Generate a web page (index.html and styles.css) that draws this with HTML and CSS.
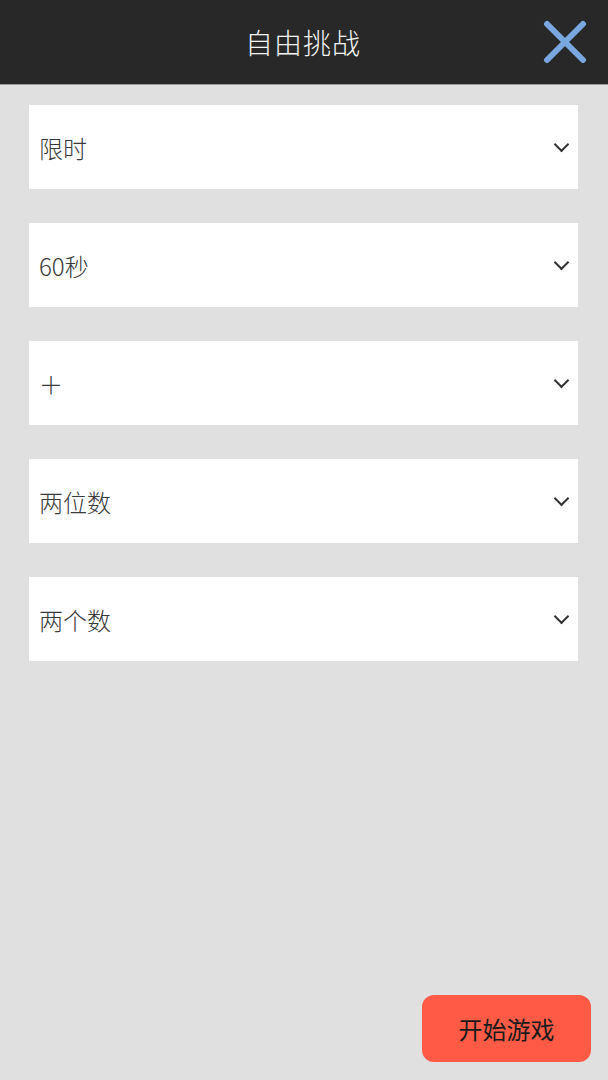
FILE: index.html
```html
<!DOCTYPE html>
<html lang="zh">
<head>
    <meta charset="UTF-8">
    <meta name="viewport" content="width=device-width, initial-scale=1.0">
    <title>自由挑战</title>
    <link rel="stylesheet" href="styles.css">
</head>
<body>
    <div class="page">
        <header class="top-bar">
            <h1>自由挑战</h1>
            <button class="close-btn" aria-label="关闭">
                <svg width="44" height="44" viewBox="0 0 44 44">
                    <path d="M4 4 L40 40 M40 4 L4 40" stroke="#79a8e0" stroke-width="6" stroke-linecap="round" fill="none"/>
                </svg>
            </button>
        </header>

        <div class="options">
            <div class="select-box"><span>限时</span><i class="chevron"></i></div>
            <div class="select-box"><span>60秒</span><i class="chevron"></i></div>
            <div class="select-box"><span>＋</span><i class="chevron"></i></div>
            <div class="select-box"><span>两位数</span><i class="chevron"></i></div>
            <div class="select-box"><span>两个数</span><i class="chevron"></i></div>
        </div>

        <div class="footer">
            <button class="start-btn">开始游戏</button>
        </div>
    </div>
</body>
</html>
```

FILE: styles.css
```css
*, *::before, *::after {
    box-sizing: border-box;
}

body {
    margin: 0;
    padding: 0;
    font-family: "Noto Sans CJK SC", "Noto Sans", sans-serif;
    background-color: #e0e0e0;
    color: #333;
}

.page {
    display: flex;
    flex-direction: column;
    min-height: 100vh;
}

.top-bar {
    height: 85px;
    background-color: #282828;
    border-bottom: 1px solid #9a9a9a;
    display: flex;
    align-items: center;
    justify-content: center;
    position: relative;
}

.top-bar h1 {
    margin: 0;
    font-size: 28px;
    font-weight: 300;
    color: #f4f4f4;
    letter-spacing: 1px;
    padding-right: 2px;
}

.close-btn {
    position: absolute;
    right: 21px;
    top: 20px;
    width: 44px;
    height: 44px;
    padding: 0;
    border: none;
    background: none;
    cursor: pointer;
}

.close-btn svg {
    display: block;
}

.options {
    display: flex;
    flex-direction: column;
    gap: 34px;
    padding: 20px 30px 0 29px;
}

.select-box {
    height: 84px;
    background-color: #fff;
    display: flex;
    align-items: center;
    justify-content: space-between;
    padding: 0 10px 0 10px;
    font-size: 24px;
    font-weight: 300;
    color: #3a3a3a;
}

.chevron {
    width: 11px;
    height: 11px;
    border-right: 2.5px solid #333;
    border-bottom: 2.5px solid #333;
    transform: rotate(45deg);
    margin-right: 1px;
    margin-top: -6px;
}

.footer {
    margin-top: auto;
    display: flex;
    justify-content: flex-end;
    padding: 0 17px 18px 0;
}

.start-btn {
    width: 169px;
    height: 67px;
    background-color: #fe5a46;
    border: none;
    border-radius: 12px;
    font-family: inherit;
    font-size: 24px;
    font-weight: 400;
    color: #1a1a1a;
    cursor: pointer;
}
```
